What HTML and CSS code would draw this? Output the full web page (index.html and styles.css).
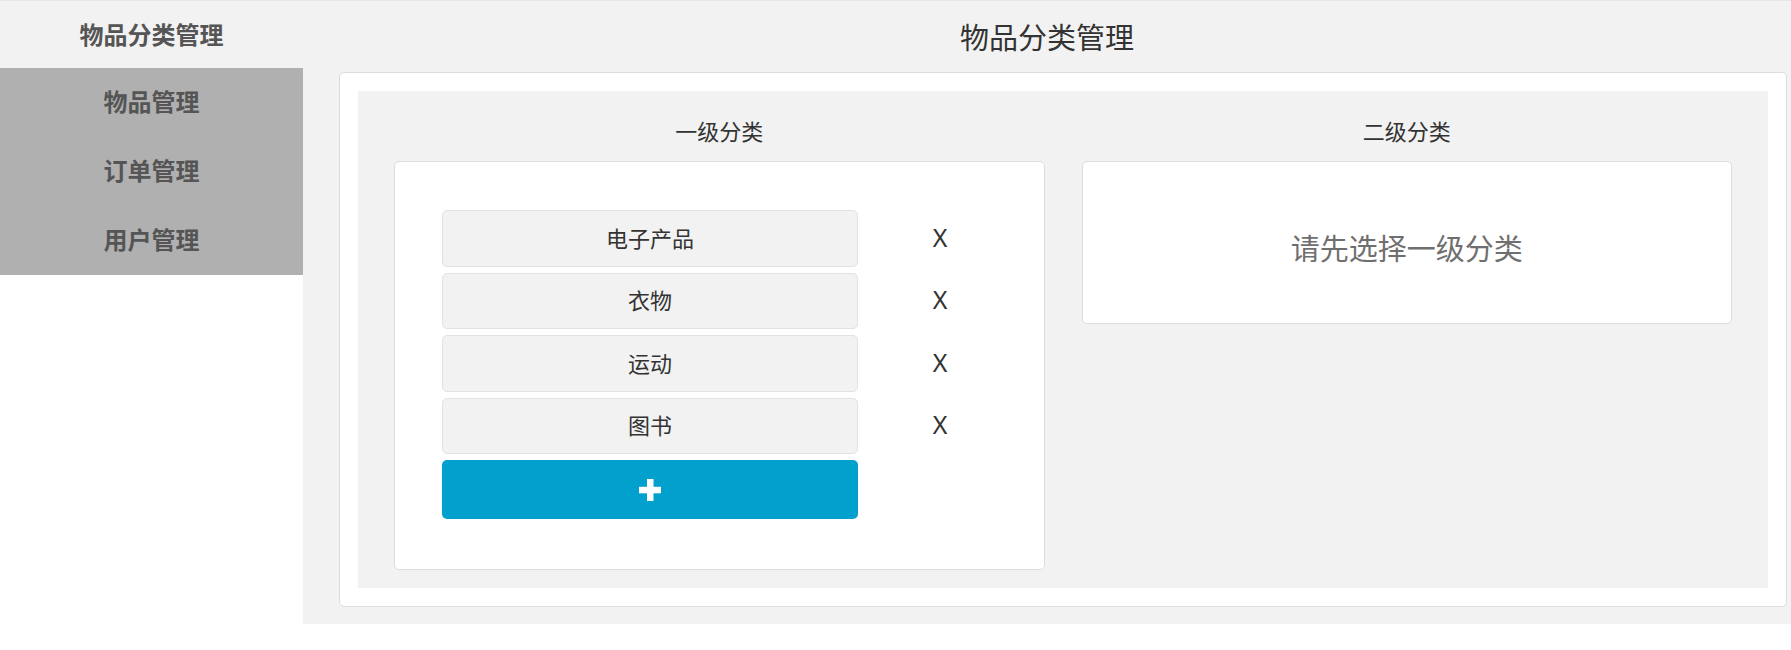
FILE: index.html
```html
<!DOCTYPE html>
<html lang="zh-CN">
<head>
  <meta charset="UTF-8">
  <meta name="viewport" content="width=device-width, initial-scale=1">
  <title>物品分类管理</title>
  <link rel="stylesheet" href="styles.css">
</head>
<body>

<div class="page">
  <div class="sidebar">
    <div class="brand">物品分类管理</div>
    <ul class="menu">
      <li>物品管理</li>
      <li>订单管理</li>
      <li>用户管理</li>
    </ul>
  </div>

  <div class="main">
    <h1 class="main-title">物品分类管理</h1>
    <div class="card">
      <div class="panel">
        <div class="col">
          <h3 class="col-title">一级分类</h3>
          <div class="box box-list">
            <div class="row">
              <div class="item">电子产品</div>
              <div class="del">X</div>
            </div>
            <div class="row">
              <div class="item">衣物</div>
              <div class="del">X</div>
            </div>
            <div class="row">
              <div class="item">运动</div>
              <div class="del">X</div>
            </div>
            <div class="row">
              <div class="item">图书</div>
              <div class="del">X</div>
            </div>
            <button class="add">
              <svg width="22" height="22" viewBox="0 0 22 22"><rect x="8" y="0" width="6.5" height="22" fill="#fff"/><rect x="0" y="7.8" width="22" height="6.5" fill="#fff"/></svg>
            </button>
          </div>
        </div>
        <div class="col">
          <h3 class="col-title">二级分类</h3>
          <div class="box box-empty">请先选择一级分类</div>
        </div>
      </div>
    </div>
  </div>
</div>

</body>
</html>
```

FILE: styles.css
```css
body {
  margin: 0;
  font-family: "Noto Sans CJK SC", "Noto Sans", sans-serif;
  color: #333;
  background: #fff;
}
.page {
  display: flex;
  border-top: 1px solid #e6e6e6;
}
.sidebar {
  width: 303px;
  flex-shrink: 0;
}
.brand {
  height: 67px;
  line-height: 65px;
  padding-bottom: 2px;
  box-sizing: border-box;
  background: #f2f2f2;
  text-align: center;
  font-size: 24px;
  font-weight: bold;
  color: #555;
}
.menu {
  list-style: none;
  margin: 0;
  padding: 0;
  background: #b0b0b0;
}
.menu li {
  height: 69px;
  line-height: 66px;
  padding-bottom: 3px;
  box-sizing: border-box;
  text-align: center;
  font-size: 24px;
  font-weight: bold;
  color: #555;
  cursor: pointer;
}
.main {
  flex: 1;
  height: 623px;
  background: #f2f2f2;
}
.main-title {
  margin: 0;
  height: 71px;
  line-height: 71px;
  text-align: center;
  font-size: 29px;
  font-weight: normal;
  color: #333;
}
.card {
  margin: 0 4px 18px 36px;
  padding: 18px;
  background: #fff;
  border: 1px solid #ddd;
  border-radius: 5px;
}
.panel {
  display: flex;
  gap: 37px;
  padding: 0 36px 18px;
  background: #f2f2f2;
}
.col {
  flex: 1;
}
.col-title {
  margin: 0 0 20px;
  padding-top: 28px;
  line-height: 22px;
  text-align: center;
  font-size: 22px;
  font-weight: normal;
  color: #333;
}
.box {
  background: #fff;
  border: 1px solid #ddd;
  border-radius: 5px;
}
.box-list {
  padding: 48px 47px 50px;
}
.row {
  display: flex;
  align-items: center;
  margin-bottom: 6px;
}
.item {
  width: 75%;
  height: 56.5px;
  box-sizing: border-box;
  display: flex;
  align-items: center;
  justify-content: center;
  padding-bottom: 3px;
  background: #f2f2f2;
  border: 1px solid #e2e2e2;
  border-radius: 5px;
  font-size: 22px;
  color: #333;
}
.del {
  flex: 1;
  padding-left: 26px;
  padding-bottom: 3px;
  text-align: center;
  font-family: "Noto Sans", sans-serif;
  font-size: 25px;
  color: #333;
  cursor: pointer;
}
.add {
  display: flex;
  align-items: center;
  justify-content: center;
  width: 75%;
  height: 59px;
  margin-top: 1px;
  padding: 0;
  border: none;
  border-radius: 5px;
  background: #01a0cd;
  cursor: pointer;
}
.box-empty {
  padding: 64px 0 55px;
  line-height: 42px;
  text-align: center;
  font-size: 29px;
  color: #6f6f6f;
}
```
